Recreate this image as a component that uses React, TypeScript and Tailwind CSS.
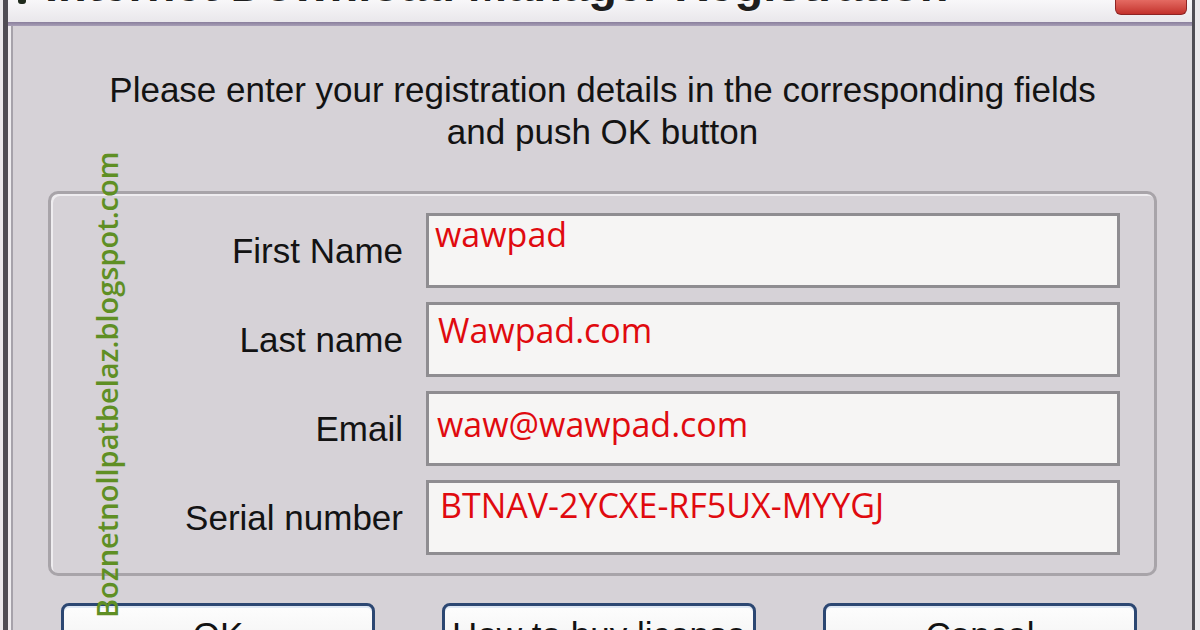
export default function App() {
  const rows = [
    { label: 'First Name', value: 'wawpad', cls: 'pt-[1px] pl-[6px]' },
    { label: 'Last name', value: 'Wawpad.com', cls: 'pt-[8px] pl-[9px]' },
    { label: 'Email', value: 'waw@wawpad.com', cls: 'pt-[13px] pl-[8px]' },
    { label: 'Serial number', value: 'BTNAV-2YCXE-RF5UX-MYYGJ', cls: 'pt-[5px] pl-[11px]' },
  ];
  const buttons = ['OK', 'How to buy license', 'Cancel'];
  return (
    <div className="relative h-[630px] w-[1200px] overflow-hidden bg-[#ebe9ec] pl-[3px] pr-[5px] font-['Liberation_Sans',Arial,sans-serif]">
      <div className="flex h-full flex-col border-l-[5px] border-r-[3px] border-[#4f4d54] bg-[#eeecef]">
        {/* title bar */}
        <div className="relative h-[22px] shrink-0 overflow-hidden bg-gradient-to-b from-[#f8f7f9] to-[#e9e7eb]">
          <div className="absolute left-[10px] top-0 h-[4px] w-[8px] rounded-b-[3px] bg-[#1f2a1c]" />
          <div className="mt-[-39px] whitespace-nowrap pl-[37px] text-[47px] font-bold leading-none text-[#1e1e1e] [text-shadow:0_0_3px_#ffffff]">
            Internet Download Manager Registration
          </div>
          <div className="absolute right-[5px] top-0 h-[15px] w-[72px] rounded-b-[6px] border border-t-0 border-[#8e2424] bg-gradient-to-b from-[#e46a62] to-[#c3302c]" />
        </div>
        <div className="h-[4px] shrink-0 bg-gradient-to-b from-[#8a7f9c] to-[#a89fb6]" />
        <div className="flex flex-1 pl-[3px]">
          <div className="relative flex flex-1 flex-col border-l-2 border-[#a6a2aa] bg-[#d6d2d7]">
            <div className="pt-[43px] text-center text-[35px] leading-[42px] text-[#131313]">
              <div>Please enter your registration details in the corresponding fields</div>
              <div>and push OK button</div>
            </div>
            <div className="ml-[35px] mr-[35px] mt-[38px] rounded-[10px] border-[3px] border-[#a8a4a9] pb-[18px] pr-[34px] pt-[19px] shadow-[inset_2px_2px_0_#eeecef]">
              <div className="grid grid-cols-[352px_1fr] gap-x-[23px] gap-y-[14px]">
                {rows.map((r) => (
                  <div key={r.label} className="contents">
                    <div className="flex items-center justify-end text-[35px] leading-none text-[#131313]">
                      {r.label}
                    </div>
                    <div
                      className={`h-[75px] border-[3px] border-[#8f8d91] bg-[#f6f5f4] font-['Open_Sans',sans-serif] text-[34px] leading-none text-[#e00a0f] ${r.cls}`}
                    >
                      {r.value}
                    </div>
                  </div>
                ))}
              </div>
            </div>
            <div className="mt-[27px] flex gap-[67px] pl-[48px]">
              {buttons.map((b) => (
                <div
                  key={b}
                  className="h-[75px] w-[314px] shrink-0 rounded-t-[8px] border-[3px] border-[#2c4772] bg-gradient-to-b from-[#fdfdfd] to-[#ececec] pt-[11px] text-center text-[35px] leading-none text-[#131313] shadow-[inset_0_2px_0_#dfe8f4]"
                >
                  {b}
                </div>
              ))}
            </div>
            <div className="absolute left-[79px] top-[119px] h-[473px] rotate-180 whitespace-nowrap font-['Open_Sans',sans-serif] text-[29px] font-semibold leading-none text-[#5f8f24] [writing-mode:vertical-rl]">
              Boznetnollpatbelaz.blogspot.com
            </div>
          </div>
        </div>
      </div>
    </div>
  );
}
